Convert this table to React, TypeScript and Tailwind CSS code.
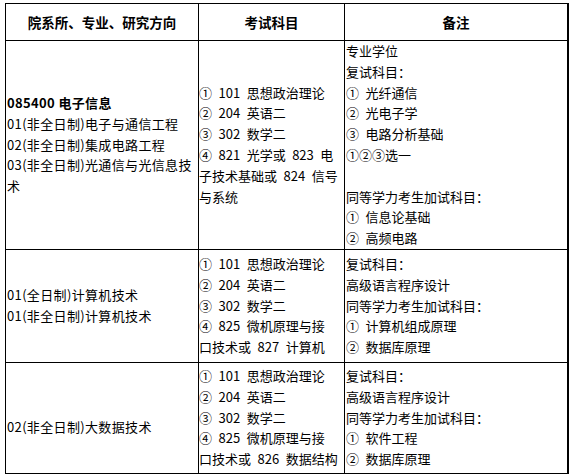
import React from 'react';

const S = '\u2002';

type Line = string | { text: string; bold?: boolean };

function Lines({ lines }: { lines: Line[] }) {
  return (
    <>
      {lines.map((l, i) => {
        const text = typeof l === 'string' ? l : l.text;
        const bold = typeof l !== 'string' && l.bold;
        return (
          <div key={i} className={`h-[20.8px] whitespace-pre ${bold ? 'font-bold' : ''}`}>
            {text || '\u00a0'}
          </div>
        );
      })}
    </>
  );
}

const examA = [`①${S}101${S}思想政治理论`, `②${S}204${S}英语二`, `③${S}302${S}数学二`];

export default function App() {
  return (
    <div className="min-h-screen w-[573px] bg-white pl-[5px] pt-[3px] font-['Noto_Sans_CJK_SC',sans-serif] text-[13px] leading-[20.8px] text-black">
      <div className="grid w-[564px] grid-cols-[193px_146px_224px] grid-rows-[37px_209px_113px_111px] border-l border-t border-black">
        {/* header */}
        <div className="flex items-center justify-center border-b border-r border-black text-[13.5px] font-bold">
          院系所、专业、研究方向
        </div>
        <div className="flex items-center justify-center border-b border-r border-black text-[13.5px] font-bold">
          考试科目
        </div>
        <div className="flex items-center justify-center border-b border-r-2 border-black text-[13.5px] font-bold">
          备注
        </div>

        {/* 085400 */}
        <div className="flex flex-col justify-center overflow-hidden border-b border-r border-black pl-px tracking-[0.35px]">
          <Lines
            lines={[
              { text: '085400 电子信息', bold: true },
              '01(非全日制)电子与通信工程',
              '02(非全日制)集成电路工程',
              '03(非全日制)光通信与光信息技',
              '术',
            ]}
          />
        </div>
        <div className="flex flex-col justify-center border-b border-r border-black">
          <Lines
            lines={[
              ...examA,
              `④${S}821${S}光学或${S}823${S}电`,
              `子技术基础或${S}824${S}信号`,
              '与系统',
            ]}
          />
        </div>
        <div className="flex flex-col justify-start border-b border-r-2 border-black pl-px">
          <Lines
            lines={[
              '专业学位',
              '复试科目：',
              `①${S}光纤通信`,
              `②${S}光电子学`,
              `③${S}电路分析基础`,
              '①②③选一',
              '',
              '同等学力考生加试科目：',
              `①${S}信息论基础`,
              `②${S}高频电路`,
            ]}
          />
        </div>

        {/* 计算机技术 */}
        <div className="flex flex-col justify-center border-b border-r border-black pl-px tracking-[0.35px]">
          <Lines lines={['01(全日制)计算机技术', '01(非全日制)计算机技术']} />
        </div>
        <div className="flex flex-col justify-center border-b border-r border-black">
          <Lines lines={[...examA, `④${S}825${S}微机原理与接`, `口技术或${S}827${S}计算机`]} />
        </div>
        <div className="flex flex-col justify-center border-b border-r-2 border-black pl-px">
          <Lines
            lines={[
              '复试科目：',
              '高级语言程序设计',
              '同等学力考生加试科目：',
              `①${S}计算机组成原理`,
              `②${S}数据库原理`,
            ]}
          />
        </div>

        {/* 大数据技术 */}
        <div className="flex flex-col justify-start border-b border-r border-black pl-px pt-[54px] tracking-[0.35px]">
          <Lines lines={['02(非全日制)大数据技术']} />
        </div>
        <div className="flex flex-col justify-center border-b border-r border-black">
          <Lines lines={[...examA, `④${S}825${S}微机原理与接`, `口技术或${S}826${S}数据结构`]} />
        </div>
        <div className="flex flex-col justify-center border-b border-r-2 border-black pl-px">
          <Lines
            lines={[
              '复试科目：',
              '高级语言程序设计',
              '同等学力考生加试科目：',
              `①${S}软件工程`,
              `②${S}数据库原理`,
            ]}
          />
        </div>
      </div>
    </div>
  );
}
